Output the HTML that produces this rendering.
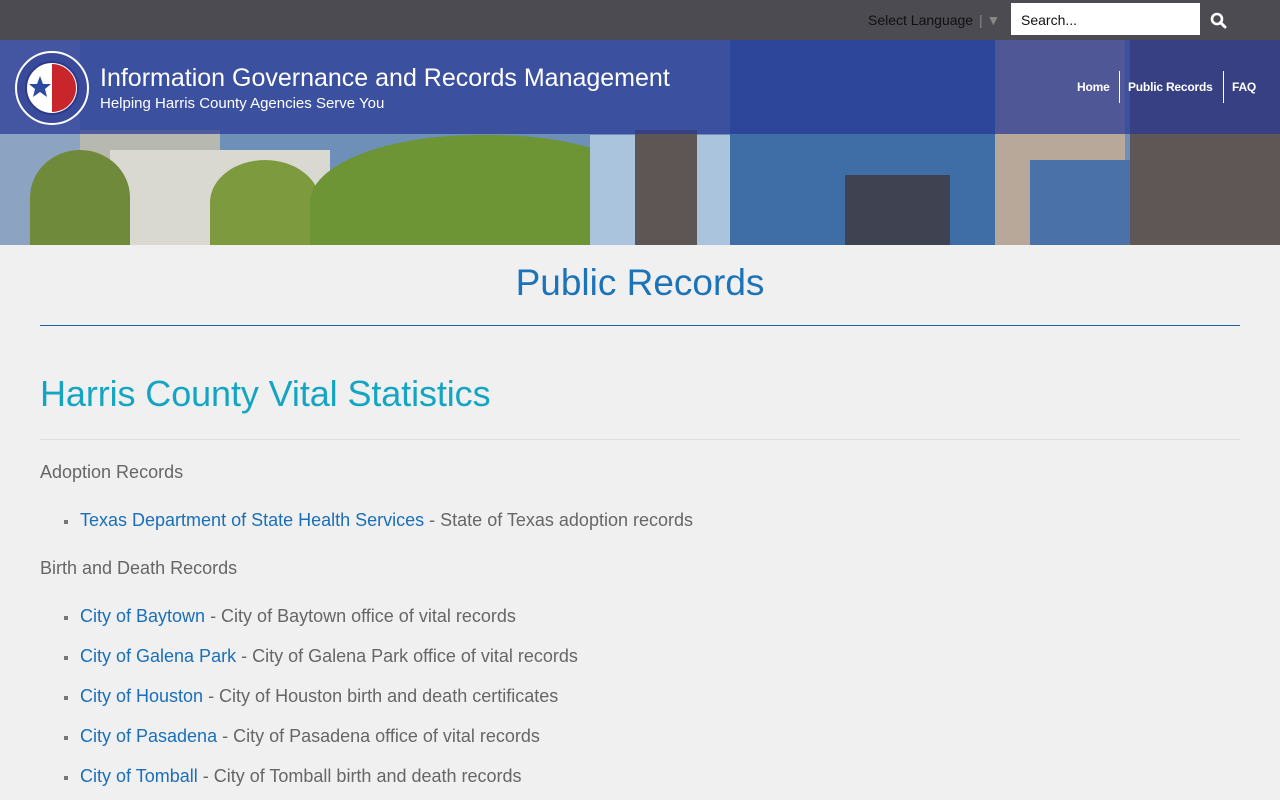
<!DOCTYPE html>
<html><head><meta charset="utf-8"><style>
*{margin:0;padding:0;box-sizing:border-box}
body{width:1280px;height:800px;overflow:hidden;background:#f0f0f0;font-family:"Liberation Sans",Arial,sans-serif;position:relative}
.top{position:absolute;left:0;top:0;width:1280px;height:40px;background:#4b4b51}
.lang{position:absolute;left:868px;top:12px;font-size:14px;color:#111}
.lang span{color:#888;margin-left:2px}
.search{position:absolute;left:1011px;top:3px;width:189px;height:32px;background:#fff;font-size:14px;color:#111;padding:9px 10px}
.banner{position:absolute;left:0;top:40px;width:1280px;height:205px;overflow:hidden;background:#6d8fb8}
.b{position:absolute}
.overlay{position:absolute;left:0;top:0;width:1280px;height:94px;background:rgba(40,55,150,.72)}
.title{position:absolute;left:100px;top:24px;color:#fff;font-size:25px}
.sub{position:absolute;left:100px;top:55px;color:#fff;font-size:15px}
.nav{position:absolute;top:31px;height:32px;color:#fff;font-size:12px;font-weight:bold;line-height:32px;letter-spacing:-0.2px}
h1{position:absolute;top:262px;width:1280px;text-align:center;font-weight:normal;font-size:37px;color:#1c73b7}
.hr1{position:absolute;left:40px;top:325px;width:1200px;height:1px;background:#1f5fa8}
h2{position:absolute;left:40px;top:373px;font-weight:normal;font-size:36px;color:#14a5c3;letter-spacing:-0.1px}
.hr2{position:absolute;left:40px;top:439px;width:1200px;height:1px;background:#ddd}
p,li{position:absolute;font-size:18px;color:#666}
p{left:40px}
li{left:80px;list-style:none}
li:before{content:"";position:absolute;left:-16px;top:10px;width:4px;height:4px;background:#777}
a{color:#1a6fb8;text-decoration:none}
</style></head><body>
<div class="top"></div>
<div class="lang">Select Language <span>| ▼</span></div>
<div class="search">Search...</div>
<svg style="position:absolute;left:1210px;top:12px" width="17" height="17" viewBox="0 0 17 17"><circle cx="7" cy="7" r="5" fill="none" stroke="#fff" stroke-width="2.6"/><line x1="10.5" y1="10.5" x2="15" y2="15" stroke="#fff" stroke-width="3" stroke-linecap="round"/></svg>
<div class="banner">
 <div class="b" style="left:0;top:0;width:80px;height:205px;background:#8da3c2"></div>
 <div class="b" style="left:80px;top:90px;width:140px;height:115px;background:#b7b9b0"></div>
 <div class="b" style="left:110px;top:110px;width:220px;height:95px;background:#d9d9d2"></div>
 <div class="b" style="left:30px;top:110px;width:100px;height:95px;background:#6f8a3a;border-radius:50% 50% 0 0"></div>
 <div class="b" style="left:210px;top:120px;width:110px;height:85px;background:#7d9a3e;border-radius:50% 50% 0 0"></div>
 <div class="b" style="left:310px;top:95px;width:350px;height:140px;background:#6d9535;border-radius:48% 48% 0 0"></div>
 <div class="b" style="left:590px;top:95px;width:140px;height:110px;background:#a9c4dc"></div>
 <div class="b" style="left:635px;top:90px;width:62px;height:115px;background:#5e5555"></div>
 <div class="b" style="left:730px;top:0;width:265px;height:205px;background:#3e6ea5"></div>
 <div class="b" style="left:845px;top:135px;width:105px;height:70px;background:#3f4250"></div>
 <div class="b" style="left:995px;top:0;width:130px;height:205px;background:#b8a89a"></div>
 <div class="b" style="left:1030px;top:120px;width:130px;height:85px;background:#4b72a8"></div>
 <div class="b" style="left:1130px;top:0;width:150px;height:205px;background:#5f5755"></div>
 <div class="overlay"></div>
 <svg class="b" style="left:14px;top:10px" width="76" height="76" viewBox="0 0 76 76"><circle cx="38" cy="38" r="36" fill="#3a4a9a" stroke="#fff" stroke-width="2"/><circle cx="38" cy="38" r="26" fill="#fff" stroke="#2b3a8a" stroke-width="2"/><path d="M38 14 A24 24 0 0 1 62 38 A24 24 0 0 1 38 62 Z" fill="#c8262b"/><polygon points="26,26 29,34 37,34 31,39 33,47 26,42 19,47 21,39 15,34 23,34" fill="#2b4aa0"/></svg>
 <div class="title">Information Governance and Records Management</div>
 <div class="sub">Helping Harris County Agencies Serve You</div>
 <div class="nav" style="left:1077px">Home</div>
 <div class="b" style="left:1119px;top:31px;width:1px;height:32px;background:#fff"></div>
 <div class="nav" style="left:1128px">Public Records</div>
 <div class="b" style="left:1223px;top:31px;width:1px;height:32px;background:#fff"></div>
 <div class="nav" style="left:1232px">FAQ</div>
</div>
<h1>Public Records</h1>
<div class="hr1"></div>
<h2>Harris County Vital Statistics</h2>
<div class="hr2"></div>
<p style="top:462px">Adoption Records</p>
<ul>
<li style="top:510px"><a>Texas Department of State Health Services</a> - State of Texas adoption records</li>
</ul>
<p style="top:558px">Birth and Death Records</p>
<ul>
<li style="top:606px"><a>City of Baytown</a> - City of Baytown office of vital records</li>
<li style="top:646px"><a>City of Galena Park</a> - City of Galena Park office of vital records</li>
<li style="top:686px"><a>City of Houston</a> - City of Houston birth and death certificates</li>
<li style="top:726px"><a>City of Pasadena</a> - City of Pasadena office of vital records</li>
<li style="top:766px"><a>City of Tomball</a> - City of Tomball birth and death records</li>
</ul>
</body></html>
